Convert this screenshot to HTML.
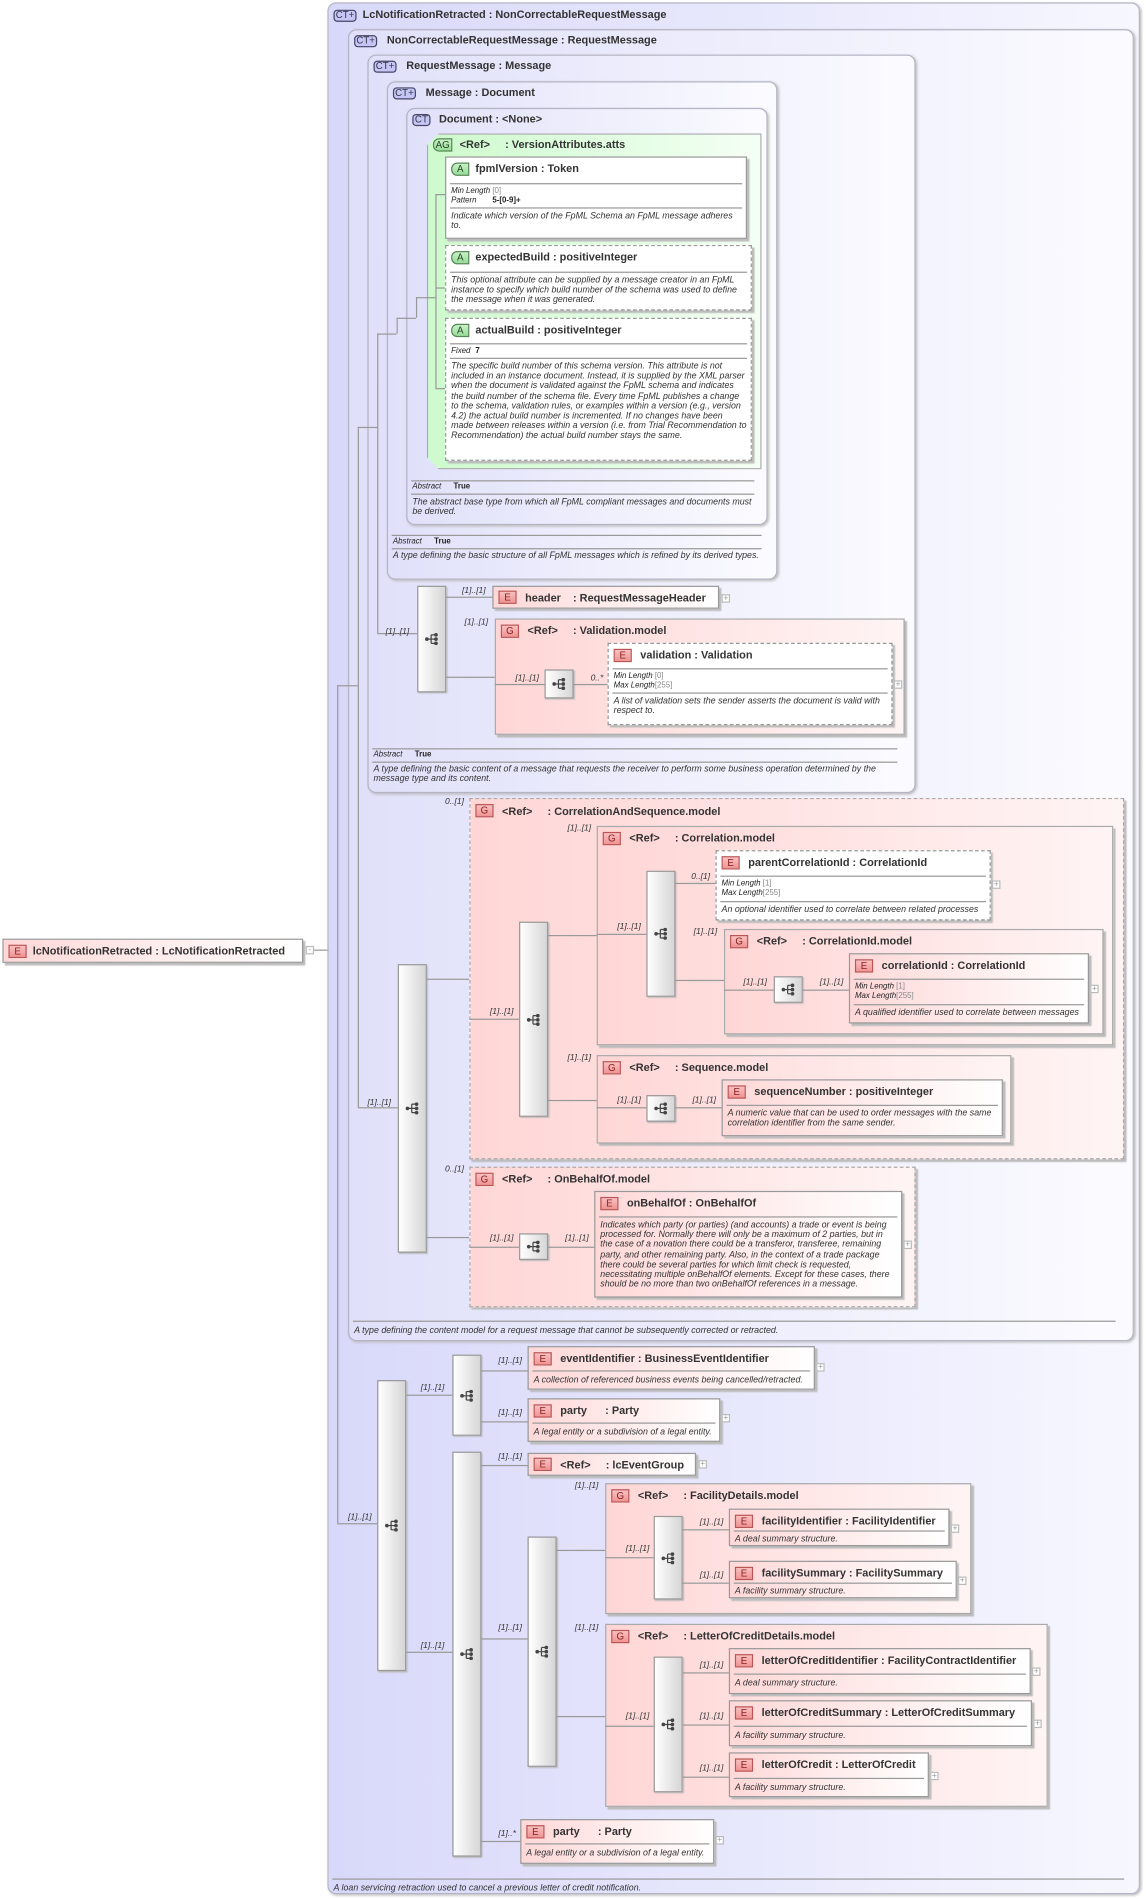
<!DOCTYPE html>
<html><head><meta charset="utf-8">
<style>
html,body{margin:0;padding:0;background:#fff;width:1146px;height:1899px;overflow:hidden}
#w{position:absolute;left:0;top:0;width:945px;height:1566px;transform:scale(1.21270);transform-origin:0 0;font-family:"Liberation Sans",sans-serif}
.bx{position:absolute;box-sizing:border-box}
.ct{border:1px solid #b4b4c4;border-radius:7px;background:linear-gradient(90deg,#d8d8fa,#f7f7ff);box-shadow:1px 1px 2px #bbb}
.ct2{border:1px solid #b4b4c4;border-radius:7px;background:linear-gradient(90deg,#e0e0fa,#fbfbff);box-shadow:1px 1px 2px #bbb}
.ag{border:1px solid #aaa;background:linear-gradient(90deg,#cdfacd,#f4fff4);box-shadow:2px 2px 1px #bbb;clip-path:polygon(10px 0,100% 0,100% 100%,10px 100%,0 calc(100% - 10px),0 10px)}
.el{border:1px solid #999;background:linear-gradient(90deg,#ffd8d8,#fff);box-shadow:2px 2px 1px #bbb}
.at{border:1px solid #999;background:#fff;box-shadow:2px 2px 1px #bbb}
.gr{border:1px solid #aaa;background:linear-gradient(90deg,#ffd6d6,#fff4f4);box-shadow:2px 2px 1px #bbb}
.ds{border-style:dashed}
.t{position:absolute;font-weight:bold;font-size:9px;color:#333;white-space:nowrap;line-height:10px}
.b{position:absolute;box-sizing:border-box;font-size:8px;line-height:8px;text-align:center;color:#334;border:1px solid #446;border-radius:3px;background:#c6c6f6;height:10px}
.bE{position:absolute;box-sizing:border-box;width:15px;height:11px;font-size:8px;line-height:10px;text-align:center;color:#822;border:1px solid #b55;background:linear-gradient(#f8c0c0,#f09494);left:4px;top:4px;font-style:normal}
.bA{position:absolute;box-sizing:border-box;width:15px;height:11px;font-size:8px;line-height:10px;text-align:center;color:#242;border:1px solid #585;border-radius:5px 0 0 5px;background:linear-gradient(#c8f0c8,#98dc98);left:4px;top:4px;font-style:normal}
.hr{position:absolute;left:3px;right:3px;height:0;border-top:1px solid #999}
.d{position:absolute;left:4px;right:3px;font-style:italic;font-size:7.3px;line-height:8.2px;color:#333}
.m{position:absolute;font-style:italic;font-size:7px;color:#333;white-space:nowrap;line-height:8px}
.f{position:absolute;font-size:6.5px;line-height:8px;color:#222;white-space:nowrap}
.f i{display:inline-block;width:34px}
.f span{color:#888}
.sq{position:absolute;box-sizing:border-box;border:1px solid #999;background:linear-gradient(90deg,#fff,#d6d6d6);box-shadow:1px 1px 1px #bbb}
.sq svg{position:absolute;left:50%;top:50%;margin:-5px 0 0 -6px}
.pl{position:absolute;box-sizing:border-box;width:7px;height:7px;border:1px solid #bbb;background:#fff;font-size:7px;line-height:5px;text-align:center;color:#999}
.h{position:absolute;height:0;border-top:1px solid #999}
.v{position:absolute;width:0;border-left:1px solid #999}
</style></head><body><div id="w">
<svg width="0" height="0" style="position:absolute"><defs><g id="ic"><circle cx="2" cy="5" r="1.5" fill="#444"/><line x1="2" y1="5" x2="5" y2="5" stroke="#444"/><line x1="5.5" y1="1.5" x2="5.5" y2="8.5" stroke="#444"/><line x1="5.5" y1="1.5" x2="9" y2="1.5" stroke="#444"/><line x1="5.5" y1="5" x2="9" y2="5" stroke="#444"/><line x1="5.5" y1="8.5" x2="9" y2="8.5" stroke="#444"/><circle cx="9.5" cy="1.5" r="1.5" fill="#444"/><circle cx="9.5" cy="5" r="1.5" fill="#444"/><circle cx="9.5" cy="8.5" r="1.5" fill="#444"/></g></defs></svg>

<div class="bx el" style="left:2px;top:774px;width:248px;height:20px"><i class="bE" style="top:4px">E</i><b class="t" style="left:24px;top:4px">lcNotificationRetracted : LcNotificationRetracted</b></div>
<div class="pl" style="left:252px;top:780px">-</div>
<div class="h" style="left:259px;top:783px;width:20px"></div>

<div class="bx ct" style="left:270px;top:2px;width:670px;height:1560px">
<div class="b" style="left:4px;top:5px;width:19px">CT+</div><b class="t" style="left:28px;top:4px">LcNotificationRetracted : NonCorrectableRequestMessage</b>
<div class="hr" style="top:1546px;right:12px"></div><div class="d" style="top:1550px">A loan servicing retraction used to cancel a previous letter of credit notification.</div>
</div>
<div class="bx ct2" style="left:287px;top:24px;width:648px;height:1082px">
<div class="b" style="left:4px;top:4px;width:19px">CT+</div><b class="t" style="left:31px;top:3px">NonCorrectableRequestMessage : RequestMessage</b>
<div class="hr" style="top:1064px;right:14px"></div><div class="d" style="top:1068px">A type defining the content model for a request message that cannot be subsequently corrected or retracted.</div>
</div>
<div class="bx ct2" style="left:303px;top:45px;width:452px;height:609px">
<div class="b" style="left:4px;top:4px;width:19px">CT+</div><b class="t" style="left:31px;top:3px">RequestMessage : Message</b>
<div class="hr" style="top:571px;right:14px"></div>
<div class="f" style="left:4px;top:573px"><i>Abstract</i><b>True</b></div>
<div class="hr" style="top:582px;right:14px"></div>
<div class="d" style="top:584px">A type defining the basic content of a message that requests the receiver to perform some business operation determined by the message type and its content.</div>
</div>
<div class="bx ct2" style="left:319px;top:67px;width:322px;height:411px">
<div class="b" style="left:4px;top:4px;width:19px">CT+</div><b class="t" style="left:31px;top:3px">Message : Document</b>
<div class="hr" style="top:373px;right:12px"></div>
<div class="f" style="left:4px;top:375px"><i>Abstract</i><b>True</b></div>
<div class="hr" style="top:384px;right:12px"></div>
<div class="d" style="top:386px">A type defining the basic structure of all FpML messages which is refined by its derived types.</div>
</div>
<div class="bx ct2" style="left:335px;top:89px;width:298px;height:344px">
<div class="b" style="left:4px;top:4px;width:15px">CT</div><b class="t" style="left:26px;top:3px">Document : &lt;None&gt;</b>
<div class="hr" style="top:306px;right:10px"></div>
<div class="f" style="left:4px;top:308px"><i>Abstract</i><b>True</b></div>
<div class="hr" style="top:317px;right:10px"></div>
<div class="d" style="top:320px">The abstract base type from which all FpML compliant messages and documents must be derived.</div>
</div>
<div class="bx ag" style="left:352px;top:110px;width:276px;height:277px">
<div class="bA" style="left:4px;top:3px;width:16px">AG</div><b class="t" style="left:26px;top:3px">&lt;Ref&gt; &nbsp;&nbsp;&nbsp; : VersionAttributes.atts</b>
</div>
<div class="v" style="left:359px;top:160px;height:160px"></div>
<div class="h" style="left:359px;top:160px;width:8px"></div>
<div class="h" style="left:359px;top:237px;width:8px"></div>
<div class="h" style="left:359px;top:320px;width:8px"></div>
<div class="h" style="left:343px;top:245px;width:16px"></div>

<div class="bx at" style="left:367px;top:129px;width:249px;height:68px">
<i class="bA">A</i><b class="t" style="left:24px;top:4px">fpmlVersion : Token</b>
<div class="hr" style="top:21px"></div>
<div class="f" style="left:4px;top:24px"><i>Min Length</i><span>[0]</span><br><i>Pattern</i><b>5-[0-9]+</b></div>
<div class="hr" style="top:41px"></div>
<div class="d" style="top:44px">Indicate which version of the FpML Schema an FpML message adheres to.</div>
</div>
<div class="bx at ds" style="left:367px;top:202px;width:253px;height:54px">
<i class="bA">A</i><b class="t" style="left:24px;top:4px">expectedBuild : positiveInteger</b>
<div class="hr" style="top:21px"></div>
<div class="d" style="top:24px">This optional attribute can be supplied by a message creator in an FpML instance to specify which build number of the schema was used to define the message when it was generated.</div>
</div>
<div class="bx at ds" style="left:367px;top:262px;width:253px;height:118px">
<i class="bA">A</i><b class="t" style="left:24px;top:4px">actualBuild : positiveInteger</b>
<div class="hr" style="top:20px"></div>
<div class="f" style="left:4px;top:23px"><i style="width:20px">Fixed</i><b>7</b></div>
<div class="hr" style="top:32px"></div>
<div class="d" style="top:35px">The specific build number of this schema version. This attribute is not included in an instance document. Instead, it is supplied by the XML parser when the document is validated against the FpML schema and indicates the build number of the schema file. Every time FpML publishes a change to the schema, validation rules, or examples within a version (e.g., version 4.2) the actual build number is incremented. If no changes have been made between releases within a version (i.e. from Trial Recommendation to Recommendation) the actual build number stays the same.</div>
</div>

<div class="v" style="left:343px;top:245px;height:17px"></div>
<div class="h" style="left:327px;top:262px;width:16px"></div>
<div class="v" style="left:327px;top:262px;height:13px"></div>
<div class="h" style="left:311px;top:275px;width:16px"></div>
<div class="v" style="left:311px;top:275px;height:247px"></div>
<div class="h" style="left:311px;top:522px;width:33px"></div>
<div class="h" style="left:295px;top:352px;width:16px"></div>
<div class="v" style="left:295px;top:352px;height:561px"></div>
<div class="h" style="left:295px;top:913px;width:33px"></div>
<div class="h" style="left:278px;top:565px;width:17px"></div>
<div class="v" style="left:278px;top:565px;height:691px"></div>
<div class="h" style="left:278px;top:1256px;width:33px"></div>

<div class="m" style="left:318px;top:518px">[1]..[1]</div>
<div class="sq" style="left:344px;top:483px;width:24px;height:88px"><svg width="12" height="10"><use href="#ic"/></svg></div>
<div class="h" style="left:368px;top:492px;width:38px"></div>
<div class="m" style="left:381px;top:484px">[1]..[1]</div>
<div class="bx el" style="left:406px;top:483px;width:187px;height:19px"><i class="bE" style="top:3px">E</i><b class="t" style="left:26px;top:4px">header &nbsp;&nbsp; : RequestMessageHeader</b></div>
<div class="pl" style="left:595px;top:490px">+</div>
<div class="h" style="left:368px;top:558px;width:40px"></div>
<div class="m" style="left:383px;top:510px">[1]..[1]</div>
<div class="bx gr" style="left:408px;top:510px;width:338px;height:96px"><i class="bE">G</i><b class="t" style="left:26px;top:4px">&lt;Ref&gt; &nbsp;&nbsp;&nbsp; : Validation.model</b></div>
<div class="h" style="left:408px;top:564px;width:41px"></div>
<div class="m" style="left:425px;top:556px">[1]..[1]</div>
<div class="sq" style="left:449px;top:552px;width:24px;height:24px"><svg width="12" height="10"><use href="#ic"/></svg></div>
<div class="h" style="left:473px;top:564px;width:28px"></div>
<div class="m" style="left:487px;top:556px">0..*</div>
<div class="bx at ds" style="left:501px;top:530px;width:235px;height:68px">
<i class="bE">E</i><b class="t" style="left:26px;top:4px">validation : Validation</b>
<div class="hr" style="top:20px"></div>
<div class="f" style="left:4px;top:23px"><i>Min Length</i><span>[0]</span><br><i>Max Length</i><span>[255]</span></div>
<div class="hr" style="top:40px"></div>
<div class="d" style="top:43px">A list of validation sets the sender asserts the document is valid with respect to.</div>
</div>
<div class="pl" style="left:737px;top:561px">+</div>

<div class="m" style="left:303px;top:906px">[1]..[1]</div>
<div class="sq" style="left:328px;top:795px;width:24px;height:238px"><svg width="12" height="10"><use href="#ic"/></svg></div>
<div class="h" style="left:352px;top:807px;width:35px"></div>
<div class="h" style="left:352px;top:1020px;width:35px"></div>
<div class="m" style="left:367px;top:658px">0..[1]</div>
<div class="bx gr ds" style="left:387px;top:658px;width:540px;height:298px"><i class="bE">G</i><b class="t" style="left:26px;top:5px">&lt;Ref&gt; &nbsp;&nbsp;&nbsp; : CorrelationAndSequence.model</b></div>
<div class="h" style="left:387px;top:840px;width:41px"></div>
<div class="m" style="left:404px;top:831px">[1]..[1]</div>
<div class="sq" style="left:428px;top:760px;width:24px;height:161px"><svg width="12" height="10"><use href="#ic"/></svg></div>
<div class="h" style="left:452px;top:771px;width:40px"></div>
<div class="h" style="left:452px;top:907px;width:40px"></div>
<div class="m" style="left:468px;top:680px">[1]..[1]</div>
<div class="bx gr" style="left:492px;top:681px;width:426px;height:181px"><i class="bE">G</i><b class="t" style="left:26px;top:4px">&lt;Ref&gt; &nbsp;&nbsp;&nbsp; : Correlation.model</b></div>
<div class="h" style="left:492px;top:770px;width:41px"></div>
<div class="m" style="left:509px;top:761px">[1]..[1]</div>
<div class="sq" style="left:533px;top:718px;width:24px;height:104px"><svg width="12" height="10"><use href="#ic"/></svg></div>
<div class="h" style="left:557px;top:728px;width:33px"></div>
<div class="m" style="left:570px;top:720px">0..[1]</div>
<div class="bx at ds" style="left:590px;top:701px;width:227px;height:58px">
<i class="bE">E</i><b class="t" style="left:26px;top:4px">parentCorrelationId : CorrelationId</b>
<div class="hr" style="top:20px"></div>
<div class="f" style="left:4px;top:23px"><i>Min Length</i><span>[1]</span><br><i>Max Length</i><span>[255]</span></div>
<div class="hr" style="top:41px"></div>
<div class="d" style="top:44px">An optional identifier used to correlate between related processes</div>
</div>
<div class="pl" style="left:818px;top:726px">+</div>
<div class="h" style="left:557px;top:808px;width:40px"></div>
<div class="m" style="left:572px;top:765px">[1]..[1]</div>
<div class="bx gr" style="left:597px;top:766px;width:313px;height:87px"><i class="bE">G</i><b class="t" style="left:26px;top:4px">&lt;Ref&gt; &nbsp;&nbsp;&nbsp; : CorrelationId.model</b></div>
<div class="h" style="left:597px;top:816px;width:41px"></div>
<div class="m" style="left:613px;top:807px">[1]..[1]</div>
<div class="sq" style="left:638px;top:805px;width:24px;height:22px"><svg width="12" height="10"><use href="#ic"/></svg></div>
<div class="h" style="left:662px;top:816px;width:38px"></div>
<div class="m" style="left:676px;top:807px">[1]..[1]</div>
<div class="bx el" style="left:700px;top:786px;width:198px;height:58px">
<i class="bE">E</i><b class="t" style="left:26px;top:4px">correlationId : CorrelationId</b>
<div class="hr" style="top:20px"></div>
<div class="f" style="left:4px;top:23px"><i>Min Length</i><span>[1]</span><br><i>Max Length</i><span>[255]</span></div>
<div class="hr" style="top:41px"></div>
<div class="d" style="top:44px">A qualified identifier used to correlate between messages</div>
</div>
<div class="pl" style="left:899px;top:812px">+</div>
<div class="m" style="left:468px;top:869px">[1]..[1]</div>
<div class="bx gr" style="left:492px;top:870px;width:342px;height:73px"><i class="bE">G</i><b class="t" style="left:26px;top:4px">&lt;Ref&gt; &nbsp;&nbsp;&nbsp; : Sequence.model</b></div>
<div class="h" style="left:492px;top:913px;width:41px"></div>
<div class="m" style="left:509px;top:904px">[1]..[1]</div>
<div class="sq" style="left:533px;top:903px;width:24px;height:22px"><svg width="12" height="10"><use href="#ic"/></svg></div>
<div class="h" style="left:557px;top:913px;width:38px"></div>
<div class="m" style="left:571px;top:904px">[1]..[1]</div>
<div class="bx el" style="left:595px;top:890px;width:232px;height:47px">
<i class="bE">E</i><b class="t" style="left:26px;top:4px">sequenceNumber : positiveInteger</b>
<div class="hr" style="top:20px"></div>
<div class="d" style="top:23px">A numeric value that can be used to order messages with the same correlation identifier from the same sender.</div>
</div>
<div class="m" style="left:367px;top:961px">0..[1]</div>
<div class="bx gr ds" style="left:387px;top:962px;width:368px;height:116px"><i class="bE">G</i><b class="t" style="left:26px;top:4px">&lt;Ref&gt; &nbsp;&nbsp;&nbsp; : OnBehalfOf.model</b></div>
<div class="h" style="left:387px;top:1028px;width:41px"></div>
<div class="m" style="left:404px;top:1018px">[1]..[1]</div>
<div class="sq" style="left:428px;top:1017px;width:24px;height:22px"><svg width="12" height="10"><use href="#ic"/></svg></div>
<div class="h" style="left:452px;top:1028px;width:38px"></div>
<div class="m" style="left:466px;top:1018px">[1]..[1]</div>
<div class="bx el" style="left:490px;top:982px;width:254px;height:88px">
<i class="bE">E</i><b class="t" style="left:26px;top:4px">onBehalfOf : OnBehalfOf</b>
<div class="hr" style="top:20px"></div>
<div class="d" style="top:23px">Indicates which party (or parties) (and accounts) a trade or event is being processed for. Normally there will only be a maximum of 2 parties, but in the case of a novation there could be a transferor, transferee, remaining party, and other remaining party. Also, in the context of a trade package there could be several parties for which limit check is requested, necessitating multiple onBehalfOf elements. Except for these cases, there should be no more than two onBehalfOf references in a message.</div>
</div>
<div class="pl" style="left:745px;top:1023px">+</div>

<div class="m" style="left:287px;top:1248px">[1]..[1]</div>
<div class="sq" style="left:311px;top:1138px;width:24px;height:240px"><svg width="12" height="10"><use href="#ic"/></svg></div>
<div class="h" style="left:335px;top:1150px;width:38px"></div>
<div class="m" style="left:347px;top:1141px">[1]..[1]</div>
<div class="sq" style="left:373px;top:1117px;width:24px;height:67px"><svg width="12" height="10"><use href="#ic"/></svg></div>
<div class="h" style="left:397px;top:1130px;width:38px"></div>
<div class="m" style="left:411px;top:1119px">[1]..[1]</div>
<div class="bx el" style="left:435px;top:1110px;width:237px;height:36px">
<i class="bE">E</i><b class="t" style="left:26px;top:4px">eventIdentifier : BusinessEventIdentifier</b>
<div class="hr" style="top:19px"></div>
<div class="d" style="top:23px">A collection of referenced business events being cancelled/retracted.</div>
</div>
<div class="pl" style="left:673px;top:1124px">+</div>
<div class="h" style="left:397px;top:1172px;width:38px"></div>
<div class="m" style="left:411px;top:1162px">[1]..[1]</div>
<div class="bx el" style="left:435px;top:1153px;width:159px;height:36px">
<i class="bE">E</i><b class="t" style="left:26px;top:4px">party &nbsp;&nbsp;&nbsp;&nbsp; : Party</b>
<div class="hr" style="top:19px"></div>
<div class="d" style="top:23px">A legal entity or a subdivision of a legal entity.</div>
</div>
<div class="pl" style="left:595px;top:1166px">+</div>
<div class="h" style="left:335px;top:1362px;width:38px"></div>
<div class="m" style="left:347px;top:1354px">[1]..[1]</div>
<div class="sq" style="left:373px;top:1197px;width:24px;height:334px"><svg width="12" height="10"><use href="#ic"/></svg></div>
<div class="h" style="left:397px;top:1208px;width:38px"></div>
<div class="m" style="left:411px;top:1198px">[1]..[1]</div>
<div class="bx el" style="left:435px;top:1198px;width:139px;height:19px"><i class="bE" style="top:3px">E</i><b class="t" style="left:26px;top:4px">&lt;Ref&gt; &nbsp;&nbsp;&nbsp; : lcEventGroup</b></div>
<div class="pl" style="left:576px;top:1204px">+</div>
<div class="h" style="left:397px;top:1351px;width:38px"></div>
<div class="m" style="left:411px;top:1339px">[1]..[1]</div>
<div class="sq" style="left:435px;top:1267px;width:24px;height:190px"><svg width="12" height="10"><use href="#ic"/></svg></div>
<div class="h" style="left:459px;top:1278px;width:40px"></div>
<div class="h" style="left:459px;top:1415px;width:40px"></div>
<div class="m" style="left:474px;top:1222px">[1]..[1]</div>
<div class="bx gr" style="left:499px;top:1223px;width:302px;height:108px"><i class="bE">G</i><b class="t" style="left:26px;top:4px">&lt;Ref&gt; &nbsp;&nbsp;&nbsp; : FacilityDetails.model</b></div>
<div class="h" style="left:499px;top:1284px;width:40px"></div>
<div class="m" style="left:516px;top:1274px">[1]..[1]</div>
<div class="sq" style="left:539px;top:1250px;width:24px;height:69px"><svg width="12" height="10"><use href="#ic"/></svg></div>
<div class="h" style="left:563px;top:1261px;width:38px"></div>
<div class="m" style="left:577px;top:1252px">[1]..[1]</div>
<div class="bx el" style="left:601px;top:1244px;width:182px;height:31px">
<i class="bE">E</i><b class="t" style="left:26px;top:4px">facilityIdentifier : FacilityIdentifier</b>
<div class="hr" style="top:17px"></div>
<div class="d" style="top:20px">A deal summary structure.</div>
</div>
<div class="pl" style="left:784px;top:1257px">+</div>
<div class="h" style="left:563px;top:1305px;width:38px"></div>
<div class="m" style="left:577px;top:1296px">[1]..[1]</div>
<div class="bx el" style="left:601px;top:1287px;width:188px;height:31px">
<i class="bE">E</i><b class="t" style="left:26px;top:4px">facilitySummary : FacilitySummary</b>
<div class="hr" style="top:17px"></div>
<div class="d" style="top:20px">A facility summary structure.</div>
</div>
<div class="pl" style="left:790px;top:1300px">+</div>
<div class="m" style="left:474px;top:1339px">[1]..[1]</div>
<div class="bx gr" style="left:499px;top:1339px;width:365px;height:151px"><i class="bE">G</i><b class="t" style="left:26px;top:4px">&lt;Ref&gt; &nbsp;&nbsp;&nbsp; : LetterOfCreditDetails.model</b></div>
<div class="h" style="left:499px;top:1423px;width:40px"></div>
<div class="m" style="left:516px;top:1412px">[1]..[1]</div>
<div class="sq" style="left:539px;top:1366px;width:24px;height:112px"><svg width="12" height="10"><use href="#ic"/></svg></div>
<div class="h" style="left:563px;top:1379px;width:38px"></div>
<div class="m" style="left:577px;top:1370px">[1]..[1]</div>
<div class="bx el" style="left:601px;top:1359px;width:249px;height:38px">
<i class="bE">E</i><b class="t" style="left:26px;top:4px">letterOfCreditIdentifier : FacilityContractIdentifier</b>
<div class="hr" style="top:20px"></div>
<div class="d" style="top:24px">A deal summary structure.</div>
</div>
<div class="pl" style="left:851px;top:1375px">+</div>
<div class="h" style="left:563px;top:1422px;width:38px"></div>
<div class="m" style="left:577px;top:1412px">[1]..[1]</div>
<div class="bx el" style="left:601px;top:1402px;width:250px;height:38px">
<i class="bE">E</i><b class="t" style="left:26px;top:4px">letterOfCreditSummary : LetterOfCreditSummary</b>
<div class="hr" style="top:20px"></div>
<div class="d" style="top:24px">A facility summary structure.</div>
</div>
<div class="pl" style="left:852px;top:1418px">+</div>
<div class="h" style="left:563px;top:1465px;width:38px"></div>
<div class="m" style="left:577px;top:1455px">[1]..[1]</div>
<div class="bx el" style="left:601px;top:1445px;width:165px;height:37px">
<i class="bE">E</i><b class="t" style="left:26px;top:4px">letterOfCredit : LetterOfCredit</b>
<div class="hr" style="top:20px"></div>
<div class="d" style="top:24px">A facility summary structure.</div>
</div>
<div class="pl" style="left:767px;top:1461px">+</div>
<div class="h" style="left:397px;top:1518px;width:32px"></div>
<div class="m" style="left:411px;top:1509px">[1]..*</div>
<div class="bx el" style="left:429px;top:1500px;width:160px;height:37px">
<i class="bE">E</i><b class="t" style="left:26px;top:4px">party &nbsp;&nbsp;&nbsp;&nbsp; : Party</b>
<div class="hr" style="top:19px"></div>
<div class="d" style="top:23px">A legal entity or a subdivision of a legal entity.</div>
</div>
<div class="pl" style="left:590px;top:1514px">+</div>
</div></body></html>
